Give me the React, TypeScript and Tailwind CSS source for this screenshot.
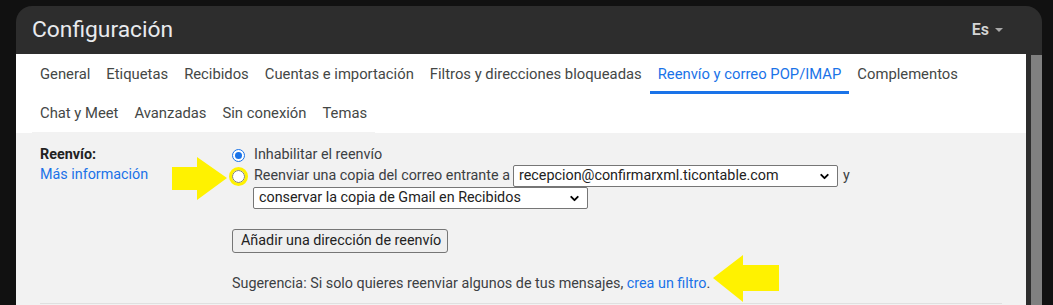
import { ChevronDown } from "lucide-react";

const tabsRow1 = [
  "General",
  "Etiquetas",
  "Recibidos",
  "Cuentas e importación",
  "Filtros y direcciones bloqueadas",
  "Reenvío y correo POP/IMAP",
  "Complementos",
];
const tabsRow2 = ["Chat y Meet", "Avanzadas", "Sin conexión", "Temas"];
const activeTab = "Reenvío y correo POP/IMAP";

function Tab({ label }: { label: string }) {
  const active = label === activeTab;
  return (
    <div
      className={
        active
          ? "flex h-full items-center border-b-[3px] border-[#1a73e8] px-2 pt-[3px] text-[#1a73e8]"
          : "flex h-full items-center border-b-[3px] border-transparent px-2 pt-[3px] text-[#444746]"
      }
    >
      {label}
    </div>
  );
}

function Radio({ checked }: { checked?: boolean }) {
  if (checked) {
    return (
      <div className="flex h-[13px] w-[13px] shrink-0 items-center justify-center rounded-full border-[1.5px] border-[#1a73e8] bg-white">
        <div className="h-[7px] w-[7px] rounded-full bg-[#1a73e8]" />
      </div>
    );
  }
  return (
    <div className="h-[13px] w-[13px] shrink-0 rounded-full border border-[#767676] bg-white" />
  );
}

function FakeSelect({ value, width }: { value: string; width: string }) {
  return (
    <div
      className={`flex h-full items-center justify-between rounded-[2px] border border-[#767676] bg-white pr-[6px] pl-[5px] text-[#222222] ${width}`}
    >
      <span>{value}</span>
      <ChevronDown size={13} strokeWidth={3.5} className="text-black" />
    </div>
  );
}

export default function App() {
  return (
    <div className="relative h-[305px] w-[1053px] overflow-hidden bg-[#111111] pt-[6px] pl-4 font-['Roboto',sans-serif]">
      <div className="flex h-full w-[1026px] flex-col rounded-t-2xl bg-[#2d2d2d]">
        {/* header */}
        <div className="flex h-[48px] shrink-0 items-center justify-between pr-[39px] pl-4">
          <h1 className="text-[22.8px] leading-none text-[#e8eaed]">Configuración</h1>
          <div className="flex items-center gap-[6px]">
            <span className="text-[16px] font-semibold leading-none text-[#d4d4d4]">Es</span>
            <svg width="8" height="4" viewBox="0 0 8 4">
              <polygon points="0,0 8,0 4,4" fill="#a8a8a8" />
            </svg>
          </div>
        </div>

        <div className="flex flex-1">
          <div className="flex w-[1010px] flex-col">
            {/* tabs */}
            <div className="bg-white text-[14.8px]">
              <div className="flex h-[40px] pl-4">
                {tabsRow1.map((t) => (
                  <Tab key={t} label={t} />
                ))}
              </div>
              <div className="flex h-[39px] pl-4">
                <div className="flex h-full border-b border-[#f2f2f2]">
                  {tabsRow2.map((t) => (
                    <Tab key={t} label={t} />
                  ))}
                </div>
              </div>
            </div>

            {/* content */}
            <div className="flex-1 bg-[#f2f2f2] pt-3 text-[14.35px] leading-5">
              <div className="mx-6 flex border-b border-[#e0e0e0] pb-[9px]">
                <div className="w-[192px] shrink-0">
                  <div className="font-bold text-[#222222]">Reenvío:</div>
                  <div className="text-[#1a73e8]">Más información</div>
                </div>
                <div className="flex flex-col text-[#3c4043]">
                  <div className="flex h-5 items-center">
                    <Radio checked />
                    <span className="ml-[9px]">Inhabilitar el reenvío</span>
                  </div>
                  <div className="flex h-[22px] items-center">
                    <Radio />
                    <span className="ml-[9px]">Reenviar una copia del correo entrante a</span>
                    <div className="ml-[3px] h-full">
                      <FakeSelect value="recepcion@confirmarxml.ticontable.com" width="w-[325px]" />
                    </div>
                    <span className="ml-[5px]">y</span>
                  </div>
                  <div className="ml-[21px] h-[22px]">
                    <FakeSelect value="conservar la copia de Gmail en Recibidos" width="w-[335px]" />
                  </div>
                  <button className="mt-5 flex h-6 w-[216px] items-center rounded-[3px] border border-[#767676] bg-[#efefef] pl-2 text-[#222222]">
                    Añadir una dirección de reenvío
                  </button>
                  <p className="mt-[21px]">
                    Sugerencia: Si solo quieres reenviar algunos de tus mensajes,{" "}
                    <span className="text-[#1a73e8]">crea un filtro</span>.
                  </p>
                </div>
              </div>
            </div>
          </div>

          {/* scrollbar */}
          <div className="flex-1 pt-px pl-[5px]">
            <div className="h-full bg-[#808080]" />
          </div>
        </div>
      </div>

      {/* yellow annotations */}
      <svg className="pointer-events-none absolute inset-0" width="1053" height="305">
        <polygon
          points="172,167 197,167 197,157 227,178 197,200 197,190 172,190"
          fill="#fff200"
        />
        <circle cx="238.5" cy="176.5" r="8" fill="none" stroke="#fff200" strokeWidth="3" />
        <polygon
          points="713,278 743,255 743,265 779,265 779,291 743,291 743,302"
          fill="#fff200"
        />
      </svg>
    </div>
  );
}
